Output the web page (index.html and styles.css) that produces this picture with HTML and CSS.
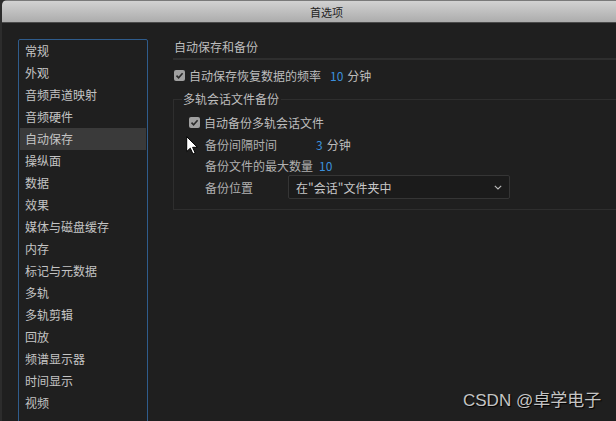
FILE: index.html
```html
<!DOCTYPE html>
<html lang="zh">
<head>
<meta charset="utf-8">
<link rel="stylesheet" href="styles.css">
</head>
<body>
<div class="window">
  <div class="titlebar"><span class="title">首选项</span></div>
  <div class="content">
    <ul class="sidebar">
      <li>常规</li>
      <li>外观</li>
      <li>音频声道映射</li>
      <li>音频硬件</li>
      <li class="active">自动保存</li>
      <li>操纵面</li>
      <li>数据</li>
      <li>效果</li>
      <li>媒体与磁盘缓存</li>
      <li>内存</li>
      <li>标记与元数据</li>
      <li>多轨</li>
      <li>多轨剪辑</li>
      <li>回放</li>
      <li>频谱显示器</li>
      <li>时间显示</li>
      <li>视频</li>
    </ul>
    <div class="main">
      <div class="heading">自动保存和备份</div>
      <div class="divider"></div>
      <div class="row check-row">
        <span class="checkbox"><svg viewBox="0 0 11 11" width="11" height="11"><path d="M2.5 5.6 L4.6 7.8 L8.6 3.2" fill="none" stroke="#2a2a2a" stroke-width="1.6"/></svg></span>
        <span class="label">自动保存恢复数据的频率</span>
        <span class="num n1">10</span>
        <span class="label unit">分钟</span>
      </div>
      <fieldset class="group">
        <legend>多轨会话文件备份</legend>
        <div class="row g-row1">
          <span class="checkbox"><svg viewBox="0 0 11 11" width="11" height="11"><path d="M2.5 5.6 L4.6 7.8 L8.6 3.2" fill="none" stroke="#2a2a2a" stroke-width="1.6"/></svg></span>
          <span class="label">自动备份多轨会话文件</span>
        </div>
        <div class="row g-row2 indent">
          <span class="label dim w-interval">备份间隔时间</span>
          <span class="num">3</span>
          <span class="label unit">分钟</span>
        </div>
        <div class="row g-row3 indent">
          <span class="label dim">备份文件的最大数量</span>
          <span class="num n3">10</span>
        </div>
        <div class="row g-row4 indent">
          <span class="label dim w-loc">备份位置</span>
          <div class="select">
            <span>在"会话"文件夹中</span>
            <svg class="chev" viewBox="0 0 8 5" width="8" height="5"><path d="M0.8 0.8 L4 4 L7.2 0.8" fill="none" stroke="#bdbdbd" stroke-width="1.1"/></svg>
          </div>
        </div>
      </fieldset>
    </div>
  </div>
  <svg class="cursor" viewBox="0 0 13 19" width="13" height="19"><path d="M0.7 0.7 L0.7 15.5 L4.3 12.2 L7 18 L9.2 17 L6.6 11.3 L11.4 11.3 Z" fill="#fff" stroke="#000" stroke-width="1"/></svg>
  <div class="watermark">CSDN @卓学电子</div>
</div>
</body>
</html>
```
FILE: styles.css
```css
html, body {
  margin: 0;
  padding: 0;
  width: 616px;
  height: 421px;
  overflow: hidden;
  background: #2c2c2c;
  font-family: "Noto Sans CJK SC", "Noto Sans", sans-serif;
  font-size: 12px;
  color: #bdbdbd;
}
.window {
  position: relative;
  margin-left: 2px;
  height: 421px;
  background: #1f1f1f;
  border-top-left-radius: 5px;
  overflow: hidden;
}
.titlebar {
  box-sizing: border-box;
  height: 23px;
  border-top: 1px solid #7a7a7a;
  border-bottom: 1px solid #4a4a4a;
  background: linear-gradient(#d2d2d2, #acacac);
  display: flex;
  align-items: center;
  padding-left: 308px;
}
.title {
  color: #222;
  font-size: 11px;
  line-height: 16px;
}
.content {
  display: flex;
  padding-top: 16px;
  padding-left: 16px;
  gap: 25px;
}
.sidebar {
  list-style: none;
  margin: 0;
  padding: 0 1px;
  width: 126px;
  height: 410px;
  border: 1px solid #2f5c8c;
  border-radius: 2px;
  flex: none;
}
.sidebar li {
  height: 22px;
  line-height: 22px;
  padding-left: 5px;
  color: #c4c4c4;
}
.sidebar li.active {
  background: #3a3a3a;
}
.main {
  flex: 1;
}
.heading {
  line-height: 16px;
  padding-left: 1px;
  color: #bdbdbd;
}
.divider {
  margin-top: 3px;
  height: 2px;
  background: #2e2e2e;
}
.row {
  display: flex;
  align-items: center;
}
.check-row {
  height: 20px;
  margin-top: 5px;
  padding-left: 1px;
}
.checkbox {
  width: 11px;
  height: 11px;
  border-radius: 2px;
  background: #a0a0a0;
  display: inline-flex;
  flex: none;
  margin-right: 4px;
}
.checkbox svg { display: block; }
.num {
  color: #3b8fdc;
}
.n1 { margin-left: 9px; }
.unit { margin-left: 4px; }
.group {
  margin: 6px 0 0 0;
  padding: 4px 0 10px 15px;
  border: 1px solid #2e2e2e;
  border-right: none;
  min-width: 0;
}
.group legend {
  margin-left: -7px;
  padding: 0 2px 0 1px;
  line-height: 16px;
  color: #bdbdbd;
}
.g-row1 { height: 22px; }
.g-row2 { height: 22px; }
.g-row3 { height: 20px; }
.g-row4 { height: 24px; }
.indent { padding-left: 16px; }
.dim { color: #b0b0b0; }
.w-interval { width: 111px; }
.n3 { margin-left: 6px; }
.w-loc { width: 83px; flex: none; }
.select {
  width: 222px;
  height: 24px;
  box-sizing: border-box;
  border: 1px solid #353535;
  border-radius: 2px;
  background: #1b1b1b;
  display: flex;
  align-items: center;
  justify-content: space-between;
  padding: 0 7px 0 7px;
  color: #c8c8c8;
}
.chev { display: block; }
.cursor {
  position: absolute;
  left: 184px;
  top: 136px;
}
.watermark {
  position: absolute;
  left: 461px;
  top: 390px;
  font-family: "Liberation Sans", "Noto Sans CJK SC", sans-serif;
  font-size: 17px;
  line-height: 22px;
  color: #c4c4c4;
  text-shadow: 1px 1px 1px #000;
  white-space: nowrap;
}
```
